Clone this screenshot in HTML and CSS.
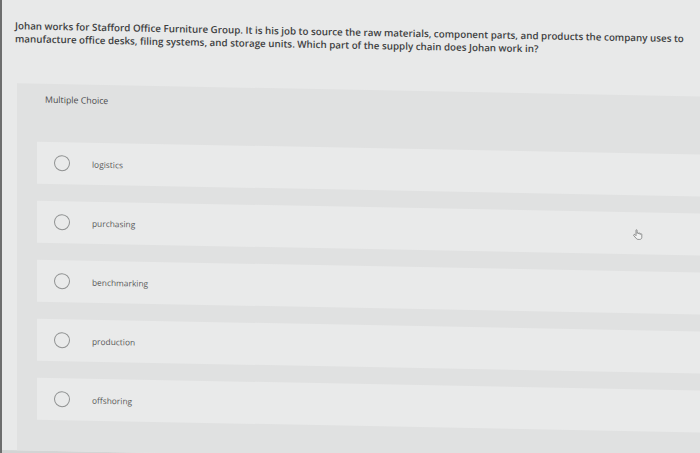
FILE: index.html
```html
<!DOCTYPE html>
<html lang="en">
<head>
    <meta charset="UTF-8">
    <meta name="viewport" content="width=device-width, initial-scale=1.0">
    <title>Multiple Choice Question</title>
    <link rel="stylesheet" href="styles.css">
</head>
<body>
    <div class="page">
        <!-- Question prompt -->
        <p class="question">
            Johan works for Stafford Office Furniture Group. It is his job to source the raw materials, component parts, and products the company uses to manufacture office desks, filing systems, and storage units. Which part of the supply chain does Johan work in?
        </p>

        <!-- Answer panel -->
        <div class="panel">
            <div class="panel-label">Multiple Choice</div>
            <ul class="options">
                <li class="option"><span class="radio"></span><span class="option-text">logistics</span></li>
                <li class="option"><span class="radio"></span><span class="option-text">purchasing</span></li>
                <li class="option"><span class="radio"></span><span class="option-text">benchmarking</span></li>
                <li class="option"><span class="radio"></span><span class="option-text">production</span></li>
                <li class="option"><span class="radio"></span><span class="option-text">offshoring</span></li>
            </ul>
        </div>

        <!-- Mouse pointer over the purchasing row -->
        <svg class="cursor" width="10" height="11" viewBox="0 0 10 11">
            <path d="M3 1.2v5.3l-1-1c-.5-.4-1.1-.3-1.3.2-.2.4 0 .8.3 1.1L3.6 9.6c.4.4.9.6 1.5.6h1.6c1.2 0 2.1-.9 2.1-2.1V5.2c0-.5-.4-.8-.8-.8s-.8.3-.8.8V4.6c0-.5-.4-.8-.8-.8s-.8.3-.8.8V4.3c0-.5-.4-.8-.8-.8s-.7.3-.7.7V1.2C4.1.8 3.9.5 3.5.5S3 .8 3 1.2z" fill="#f2f3f3" stroke="#7a7c7c" stroke-width="0.8"/>
        </svg>
    </div>
</body>
</html>
```

FILE: styles.css
```css
body {
    margin: 0;
    height: 453px;
    overflow: hidden;
    background-color: #e8e9e9;
    border-left: 2px solid #6d6e6e;
    font-family: "Open Sans", Arial, sans-serif;
    box-sizing: border-box;
}

.page {
    position: relative;
    height: 450px;
    border-bottom: 3px solid #d3d4d4;
    transform: skewY(1.1deg);
    transform-origin: 0 0;
}

.question {
    margin: 0;
    padding: 19px 8px 0 13px;
    font-size: 9.8px;
    font-weight: 600;
    line-height: 13px;
    color: #3d3e3f;
}

.panel {
    margin: 38px 0 0 15px;
    padding: 11px 0 31px 20px;
    background-color: #e0e1e1;
}

.panel-label {
    padding-left: 8px;
    font-size: 8.8px;
    line-height: 10px;
    color: #4a4b4b;
}

.options {
    list-style: none;
    margin: 37px 0 0 0;
    padding: 0;
}

.option {
    display: flex;
    align-items: center;
    height: 42px;
    margin-bottom: 17px;
    padding-left: 17px;
    background-color: #e9eaea;
}

.option:last-child {
    margin-bottom: 0;
}

.radio {
    width: 16px;
    height: 16px;
    border: 1.2px solid #8f9191;
    border-radius: 50%;
    box-sizing: border-box;
    flex-shrink: 0;
}

.option-text {
    margin-left: 22px;
    font-size: 8.4px;
    color: #5a5b5b;
}

.cursor {
    position: absolute;
    left: 631px;
    top: 217px;
}
```
